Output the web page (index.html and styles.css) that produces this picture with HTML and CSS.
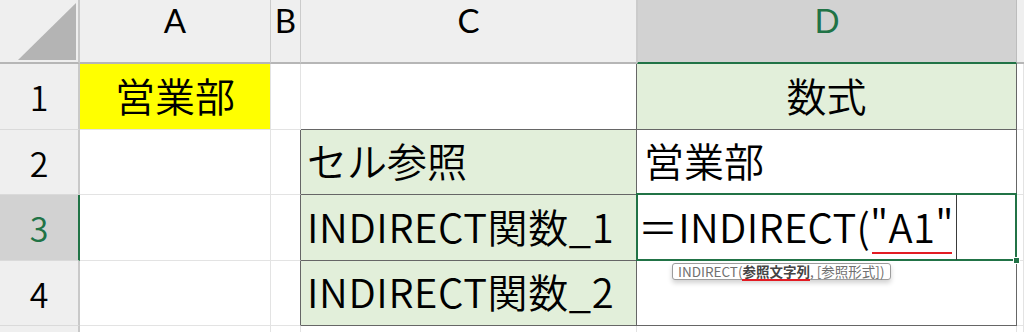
FILE: index.html
```html
<!DOCTYPE html>
<html lang="ja">
<head>
<meta charset="utf-8">
<title>INDIRECT</title>
<link rel="stylesheet" href="styles.css">
</head>
<body>
<div class="sheet">
  <div class="grid">
    <div class="hd corner"><svg class="tri" width="60" height="60" viewBox="0 0 60 60"><polygon points="58,3 58,60 0,60" fill="#b4b4b4"/></svg></div>
    <div class="hd col">A</div>
    <div class="hd col">B</div>
    <div class="hd col">C</div>
    <div class="hd col sel-col">D</div>
    <div class="hd col last"></div>

    <div class="rh">1</div>
    <div class="c center yellow">営業部</div>
    <div class="c"></div>
    <div class="c bb br"></div>
    <div class="c center green br bb">数式</div>
    <div class="c"></div>

    <div class="rh">2</div>
    <div class="c"></div>
    <div class="c br"></div>
    <div class="c green br bb pad">セル参照</div>
    <div class="c br bb pad-d">営業部</div>
    <div class="c"></div>

    <div class="rh sel-row">3</div>
    <div class="c"></div>
    <div class="c br"></div>
    <div class="c green br bb pad lat">INDIRECT関数_1</div>
    <div class="c br bb pad-edit">＝INDIRECT("A1"</div>
    <div class="c"></div>

    <div class="rh">4</div>
    <div class="c"></div>
    <div class="c br"></div>
    <div class="c green br bb pad lat">INDIRECT関数_2</div>
    <div class="c br bb"></div>
    <div class="c"></div>

    <div class="rh"></div>
    <div class="c"></div>
    <div class="c"></div>
    <div class="c"></div>
    <div class="c"></div>
    <div class="c"></div>
  </div>

  <div class="active"></div>
  <div class="handle"></div>
  <div class="editline"></div>
  <div class="squiggle"></div>
  <div class="tip">INDIRECT(<b class="arg">参照文字列</b>, [参照形式])<span class="tipline"></span></div>
</div>
</body>
</html>
```
FILE: styles.css
```css
html, body {
  margin: 0;
  padding: 0;
  background: #ffffff;
  overflow: hidden;
}
.sheet {
  position: relative;
  width: 1024px;
  height: 332px;
  overflow: hidden;
  font-family: "Noto Sans CJK JP", "Noto Sans", sans-serif;
  font-weight: 350;
  color: #000;
}
.grid {
  display: grid;
  grid-template-columns: 80px 191px 30px 336px 380px 1fr;
  grid-template-rows: 64px 66px 65px 66px 65px 20px;
}
.grid > div {
  box-sizing: border-box;
  display: flex;
  align-items: center;
  white-space: nowrap;
}
.hd {
  background: #efefef;
  border-right: 1px solid #cbcbcb;
  border-bottom: 2px solid #b6b6b6;
  justify-content: center;
  align-items: flex-start !important;
  font-family: Lato, "Noto Sans", sans-serif;
  font-weight: 400;
  font-size: 33px;
  line-height: normal;
}
.corner {
  border-right: 2px solid #c9c9c9;
  justify-content: flex-start !important;
}
.tri {
  display: block;
  margin-left: 18px;
  margin-top: 0;
}
.hd.last { border-right: none; }
.sel-col {
  background: #d2d2d2;
  color: #217346;
  border-bottom-color: #217346;
  border-left: 1px solid #cbcbcb;
  border-right-color: #bdbdbd;
}
.rh {
  background: #efefef;
  border-right: 2px solid #c9c9c9;
  border-bottom: 1px solid #dadada;
  justify-content: center;
  font-size: 34px;
}
.sel-row {
  background: #d2d2d2;
  color: #217346;
  border-right-color: #217346;
}
.c {
  border-right: 1px solid #e3e3e3;
  border-bottom: 1px solid #e3e3e3;
  font-size: 40px;
  padding-bottom: 4px;
  overflow: hidden;
}
.center { justify-content: center; }
.yellow { background: #ffff00; border-color: #ffff00 #e3e3e3 #e3e3e3 #e3e3e3; }
.green { background: #e2efda; }
.br { border-right: 1px solid #666666; }
.bb { border-bottom: 1px solid #666666; }
.pad { padding-left: 6px; }
.pad-d { padding-left: 7px; }
.pad-edit { padding-left: 1px; letter-spacing: 0.3px; }
.lat { letter-spacing: 0.6px; }

.active {
  position: absolute;
  left: 636px;
  top: 193px;
  width: 381px;
  height: 68px;
  box-sizing: border-box;
  border: 2px solid #217346;
}
.handle {
  position: absolute;
  left: 1013px;
  top: 257px;
  width: 5px;
  height: 5px;
  background: #217346;
  border: 1px solid #ffffff;
}
.editline {
  position: absolute;
  left: 956px;
  top: 195px;
  width: 1px;
  height: 65px;
  background: #3a3a3a;
}
.squiggle {
  position: absolute;
  left: 872px;
  top: 252px;
  width: 80px;
  height: 2px;
  background: #e31b23;
}
.tip {
  position: absolute;
  left: 672px;
  top: 263px;
  height: 17px;
  box-sizing: border-box;
  padding: 0 6px 0 5px;
  background: #ffffff;
  border: 1px solid #9c9c9c;
  border-radius: 3px;
  box-shadow: 0 3px 5px rgba(0, 0, 0, 0.18);
  font-size: 13.5px;
  font-weight: 400;
  line-height: 15px;
  color: #707070;
  white-space: nowrap;
}
.arg {
  color: #444444;
  font-weight: bold;
}
.tipline {
  position: absolute;
  left: 69px;
  bottom: -2px;
  width: 68px;
  height: 2px;
  background: #e31b23;
}
```
